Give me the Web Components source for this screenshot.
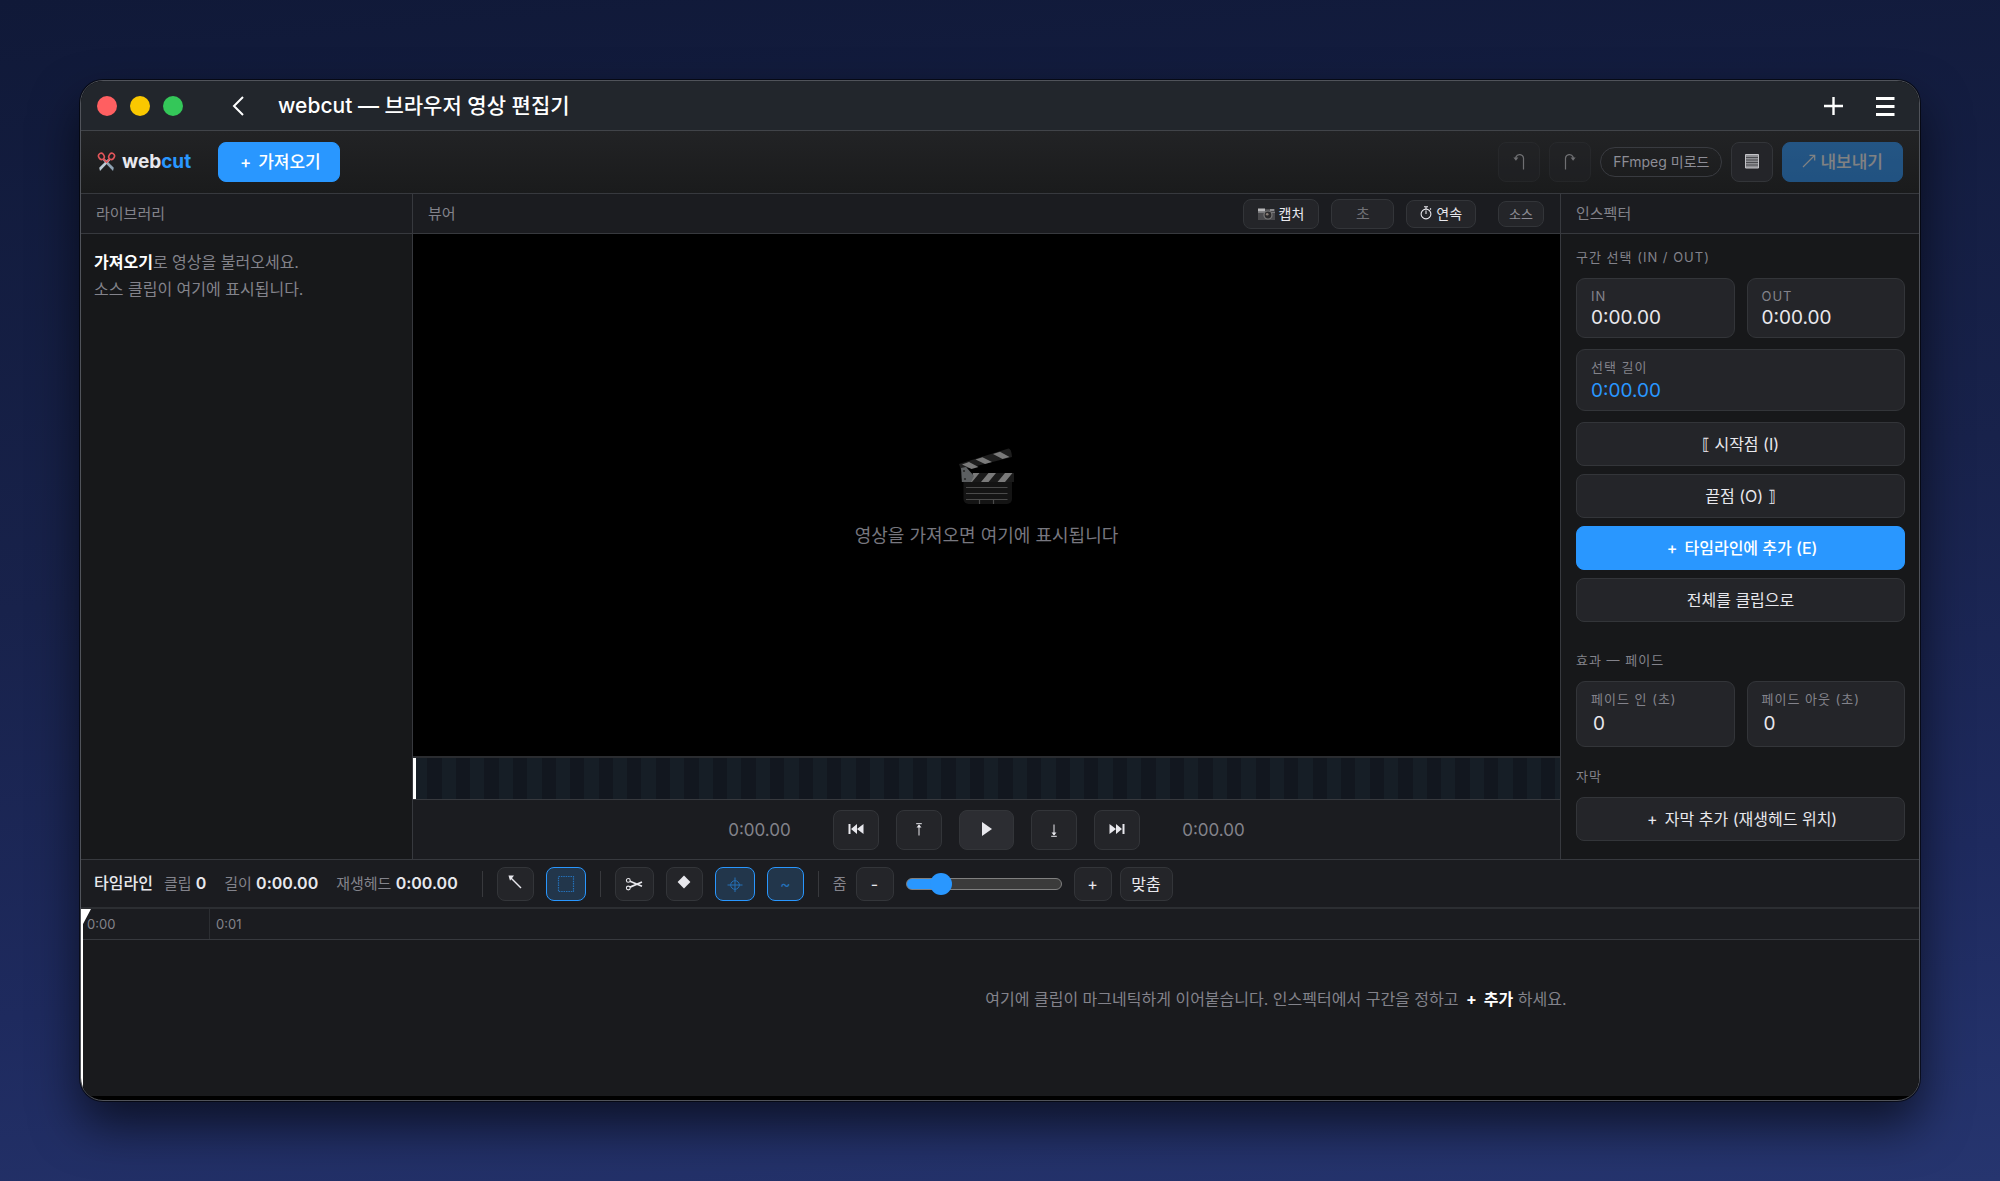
<!DOCTYPE html>
<html lang="ko">
<head>
<meta charset="utf-8">
<meta name="viewport" content="width=device-width, initial-scale=1">
<title>webcut — 브라우저 영상 편집기</title>
<style>
  :root {
    --line: #37393e;
    --edge: #333539;
    --panel: #17181a;
    --bar: #1b1c20;
    --raised: #242529;
    --text: #e8e8ed;
    --muted: #83838b;
    --accent: #2997ff;
    --font: Inter, "Noto Sans CJK KR", sans-serif;
  }
  html { height: 100%; }
  body {
    margin: 0; padding: 80px; box-sizing: border-box; min-height: 100vh; display: flex;
    background: linear-gradient(175deg, #101938 0%, #18224b 45%, #1e2a5e 75%, #26356f 100%);
    font: 16px/1.5 var(--font); color: var(--text);
    -webkit-font-smoothing: antialiased;
  }
  wc-window { flex: 1; min-width: 0; }
</style>
</head>
<body>
<wc-window></wc-window>

<script>
const define = (name, html, setup) => {
  const t = document.createElement('template');
  t.innerHTML = html;
  customElements.define(name, class extends HTMLElement {
    constructor() {
      super();
      this.attachShadow({ mode: 'open' }).append(t.content.cloneNode(true));
    }
    connectedCallback() { if (setup) setup(this, this.shadowRoot); }
  });
};

/* Icons, one drawing per name: width, height, body */
const ICONS = {
  back: [12, 20, '<path d="M11 1 2 10l9 9" fill="none" stroke="currentColor" stroke-width="2"/>'],
  add: [20, 20, '<path d="M10.500 1v18M1 10h19" fill="none" stroke="currentColor" stroke-width="2.400"/>'],
  menu: [20, 22, '<path d="M1 3.500h18.500M1 11.500h18.500M1 19.500h18.500" fill="none" stroke="currentColor" stroke-width="2.800"/>'],
  shears: [19, 20, '<path d="M5.600 8 16 19l.8-3.200L8 7z" fill="#8fa3b3"/><path d="M13.400 8 3 19l-.8-3.200L11 7z" fill="#bccbd6"/><g fill="none" stroke="#e0555a" stroke-width="1.600"><ellipse cx="4.400" cy="4.400" rx="2.700" ry="3.200" transform="rotate(-30 4.400 4.400)"/><ellipse cx="14.600" cy="4.400" rx="2.700" ry="3.200" transform="rotate(30 14.600 4.400)"/><path d="m6.400 7 3.100 3.400L12.600 7"/></g>'],
  undo: [12, 21, '<path d="M10.500 17.500V6a4 4 0 0 0-7.600-1V7" fill="none" stroke="currentColor" stroke-width="1.200"/><path d="M.4 5.500h5L2.900 8.700z" fill="currentColor"/>'],
  redo: [12, 21, '<path d="M1.500 17.500V6a4 4 0 0 1 7.600-1V7" fill="none" stroke="currentColor" stroke-width="1.200"/><path d="M6.600 5.500h5L9.100 8.700z" fill="currentColor"/>'],
  list: [14, 16, '<path d="M.5.500h13v13.500H.5z" fill="#8f9094" stroke="#c3c3c7" stroke-width="1"/><path d="M1 3.500h12M1 6h12M1 8.500h12M1 11h12" stroke="#4a4b4f" stroke-width="1"/>'],
  out: [14, 16, '<path d="M1 13 12.500 1.500M7.500 1.300h5.200v5.200" fill="none" stroke="currentColor" stroke-width="1.200"/>'],
  camera: [17, 13, '<path d="M0 2h17v11H0z" fill="#4a4a4d"/><path d="M0 1.500h7v3H0z" fill="#b9b9bb"/><path d="M0 5h17v1H0z" fill="#77777a"/><path d="M12 2h4v2h-4z" fill="#8b8b8e"/><circle cx="10" cy="8" r="4.600" fill="#777"/><circle cx="10" cy="8" r="3.400" fill="#2c2b2d"/><circle cx="9.200" cy="7.200" r="1.300" fill="#8a7f77"/>'],
  timer: [12, 16, '<circle cx="6" cy="8" r="4.900" fill="none" stroke="currentColor" stroke-width="1.100"/><path d="M6 8V4.600M6 3V1M4 .8h4M10 3.500l1-1" fill="none" stroke="currentColor" stroke-width="1.100"/>'],
  clapper: [56, 58, '<g><path d="M4.500 33h48.500v18a5 5 0 0 1-5 5H9.500a5 5 0 0 1-5-5z" fill="#141414"/><path d="M7 39.500h41.500M7 45.500h41.500M7 51.500h41.500M20.500 52v4M34.500 52v4" stroke="#4a4a4a" stroke-width="1.200"/><path d="M2.500 25H55v9H2.500z" fill="#1a1a1a"/><path d="M22 34l7.500-9H37l-7.500 9zM38.500 34l7.500-9h7.500L46 34zM9 34l5-6v-3h6.500L13 34z" fill="#7a7a7a"/><path d="M0 16 49.500.5q2.500 0 3.300 6.500l.2 2L2 22z" fill="#1e1e1e"/><path d="M3 16.500 10 14l9.500 5-7 2zM16.500 11.500l7-2.200L33 14l-7 2zM34 6l7-2.200 9.500 5.200-7 2z" fill="#7a7a7a"/><path d="M2 20l5-1 8 9-3 6H3z" fill="#5c5f61"/><circle cx="5" cy="23" r="1.100" fill="#2a2a2a"/><circle cx="6" cy="31" r="1.100" fill="#2a2a2a"/></g>'],
  first: [16, 14, '<path d="M.5 1h2v10h-2zM9 1v10L3 6zM15.500 1v10L9 6z" fill="currentColor"/>'],
  last: [16, 14, '<path d="M13.500 1h2v10h-2zM7 1v10l6-5zM.5 1v10L7 6z" fill="currentColor"/>'],
  prev: [8, 14, '<path d="M1.200.7h5.600M4 12.500V2" fill="none" stroke="currentColor" stroke-width="1"/><path d="M1.500 4.500 4 1.500l2.500 3z" fill="currentColor"/>'],
  next: [8, 14, '<path d="M1.200 13.300h5.600M4 1.500V12" fill="none" stroke="currentColor" stroke-width="1"/><path d="M1.500 9.500 4 12.500l2.500-3z" fill="currentColor"/>'],
  play: [12, 16, '<path d="M1 0v14l10-7z" fill="currentColor"/>'],
  pointer: [14, 18, '<path d="M2.500 2.500 13 13" fill="none" stroke="currentColor" stroke-width="1.400"/><path d="M.5.500h5.500L2 5.800z" fill="currentColor"/>'],
  marquee: [18, 18, '<path d="M1.500 1.500h15v15h-15z" fill="none" stroke="currentColor" stroke-width="1.200" stroke-dasharray="1.500 .9"/>'],
  cut: [18, 14, '<g fill="none" stroke="currentColor"><circle cx="3.300" cy="3.400" r="1.900" stroke-width="1.100"/><circle cx="3.300" cy="11" r="1.900" stroke-width="1.100"/><path d="M5 4.300 17 9.300M5 10.100 17 5" stroke-width="1.700"/></g>'],
  keyframe: [14, 18, '<path d="m7 .6 6.400 6.400L7 13.400.6 7z" fill="currentColor"/>'],
  snap: [16, 16, '<g fill="none" stroke="currentColor" stroke-width="1"><circle cx="8" cy="9" r="4.300"/><path d="M8 1.500v14.500M.5 9h15"/></g>']
};
define('wc-icon', '', (el, root) => {
  const [w, h, body] = ICONS[el.getAttribute('name')];
  root.innerHTML = `<style>:host{display:inline-flex;flex:none}svg{display:block}</style>
    <svg width="${w}" height="${h}" viewBox="0 0 ${w} ${h}" aria-hidden="true">${body}</svg>`;
});

define('wc-button', `
<style>
  :host { display: block; flex: none; }
  button {
    box-sizing: border-box; width: var(--w, 100%); height: var(--h, 44px); padding: 0 var(--px, 0px);
    display: flex; align-items: center; justify-content: center; gap: var(--gap, 4px);
    border: 1px solid var(--edge); border-radius: 8px; background: var(--raised);
    color: var(--text); font: 400 var(--fs, 16px)/24px var(--font); white-space: nowrap;
  }
  :host([primary]) button { background: var(--accent); border-color: var(--accent); color: #fff; font-weight: 500; }
  :host([active]) button { background: #22364b; border-color: var(--accent); color: #2470b8; }
  :host([strong]) button { background: #2c2d32; }
  :host([disabled]) button { opacity: .4; }
  :host([primary][disabled]) button { opacity: .44; }
  :host([bare]) button { border: 0; background: none; color: #fff; }
  ::slotted(.plus) { width: 17px; text-align: center; }
</style>
<button type="button"><slot></slot></button>`, (el, root) => {
  const b = root.querySelector('button');
  if (el.hasAttribute('label')) b.setAttribute('aria-label', el.getAttribute('label'));
  if (el.hasAttribute('active')) b.setAttribute('aria-pressed', 'true');
  b.disabled = el.hasAttribute('disabled');
});

define('wc-titlebar', `
<style>
  :host { display: flex; align-items: center; height: 49px; padding: 0 24px 0 16px; background: #22262c; border-bottom: 1px solid #414449; }
  .lights { display: flex; gap: 13px; }
  .lights i { width: 20px; height: 20px; border-radius: 50%; background: var(--c); }
  .back { margin-left: 29px; --w: 52px; --h: 40px; }
  h1 { margin: 0 auto 0 14px; font: 500 21px/32px var(--font); color: #fff; }
  .end { display: flex; gap: 12px; --w: 40px; --h: 40px; margin-right: -10px; }
</style>
<div class="lights"><i style="--c:#ff5f61"></i><i style="--c:#fac800"></i><i style="--c:#34c759"></i></div>
<wc-button class="back" bare label="뒤로"><wc-icon name="back"></wc-icon></wc-button>
<h1><slot></slot></h1>
<div class="end">
  <wc-button bare label="새로 만들기"><wc-icon name="add"></wc-icon></wc-button>
  <wc-button bare label="메뉴"><wc-icon name="menu"></wc-icon></wc-button>
</div>`);

define('wc-toolbar', `
<style>
  :host { display: flex; align-items: center; height: 62px; padding: 0 16px; background: linear-gradient(#222325, #1a1b1c); border-bottom: 1px solid var(--line); --h: 40px; --fs: 17px; }
  .logo { display: flex; align-items: center; gap: 6px; font: 700 19px/28px var(--font); }
  .logo em { font-style: normal; color: var(--accent); }
  .import { margin-left: 27px; --px: 18px; --w: auto; }
  .end { margin-left: auto; display: flex; align-items: center; gap: 9px; }
  .sq { --w: 42px; }
  .badge { padding: 0 12px; border: 1px solid #393b40; border-radius: 15px; font: 14px/28px var(--font); color: #8d8d96; }
  .export { --px: 19px; --w: auto; }
</style>
<div class="logo"><wc-icon name="shears"></wc-icon><span>web<em>cut</em></span></div>
<wc-button class="import" primary><span class="plus">+</span><span>가져오기</span></wc-button>
<div class="end">
  <wc-button class="sq" disabled label="실행 취소"><wc-icon name="undo"></wc-icon></wc-button>
  <wc-button class="sq" disabled label="다시 실행"><wc-icon name="redo"></wc-icon></wc-button>
  <span class="badge">FFmpeg 미로드</span>
  <wc-button class="sq" label="목록"><wc-icon name="list"></wc-icon></wc-button>
  <wc-button class="export" primary disabled><wc-icon name="out"></wc-icon><span>내보내기</span></wc-button>
</div>`);

define('wc-panel', `
<style>
  :host { display: flex; flex-direction: column; min-width: 0; background: var(--panel); }
  header { display: flex; align-items: center; gap: 12px; height: 39px; padding: 0 16px 0 15px; background: var(--bar); border-bottom: 1px solid var(--line); }
  h2 { margin: 0 auto 0 0; font: 400 15px/24px var(--font); color: var(--muted); }
  .body { flex: 1; display: flex; flex-direction: column; }
</style>
<header><h2></h2><slot name="tools"></slot></header>
<div class="body"><slot></slot></div>`, (el, root) => {
  root.querySelector('h2').textContent = el.getAttribute('heading');
});

define('wc-library', `
<style>
  :host { display: block; padding: 15px 13px; font: 16px/27px var(--font); color: var(--muted); }
  p { margin: 0; } b { font-weight: 700; color: #fff; }
</style>
<p><b>가져오기</b>로 영상을 불러오세요.<br>소스 클립이 여기에 표시됩니다.</p>`);

define('wc-stage', `
<style>
  :host { flex: 1; display: flex; flex-direction: column; align-items: center; justify-content: center; gap: 16px; padding-top: 8px; background: #000; }
  p { margin: 0; font: 18px/28px var(--font); color: #77777f; }
</style>
<wc-icon name="clapper"></wc-icon><p><slot></slot></p>`);

define('wc-strip', `
<style>
  :host { display: block; height: 41px; border-top: 2px solid #2a2c30; border-bottom: 1px solid var(--line);
    background: repeating-linear-gradient(90deg, #161e26 0 1.245%, #12171f 1.245% 2.49%); }
  i { display: block; width: 3px; height: 100%; background: #fff; }
</style><i></i>`);

define('wc-transport', `
<style>
  :host { display: flex; align-items: center; justify-content: center; gap: 17px; height: 59px; background: var(--bar); --w: 46px; --h: 40px; }
  time { width: 113px; text-align: center; font: 17px/24px var(--font); color: var(--muted); }
  .play { --w: 55px; }
</style>
<time>0:00.00</time>
<wc-button label="처음으로"><wc-icon name="first"></wc-icon></wc-button>
<wc-button label="이전 편집점"><wc-icon name="prev"></wc-icon></wc-button>
<wc-button class="play" strong label="재생"><wc-icon name="play"></wc-icon></wc-button>
<wc-button label="다음 편집점"><wc-icon name="next"></wc-icon></wc-button>
<wc-button label="끝으로"><wc-icon name="last"></wc-icon></wc-button>
<time>0:00.00</time>`);

define('wc-seconds', `
<style>
  :host { display: block; flex: none; }
  label { display: flex; }
  input { box-sizing: border-box; width: 63px; height: 30px; padding: 0 6px; border: 1px solid var(--edge); border-radius: 8px; background: var(--raised); color: var(--text); font: 15px/20px var(--font); text-align: center; outline: 0; }
  input::placeholder { color: #717176; opacity: 1; }
</style>
<label><input type="text" inputmode="decimal" placeholder="초" aria-label="캡처 간격"></label>`);

define('wc-cell', `
<style>
  :host { display: block; flex: 1; min-width: 0; box-sizing: border-box; padding: 8px 14px 0; border: 1px solid var(--edge); border-radius: 9px; background: var(--raised); }
  .k { display: block; font: 13px/18px var(--font); letter-spacing: 1px; color: var(--muted); }
  .v { font: 19px/26px var(--font); color: var(--text); display: block; box-sizing: border-box; width: 100%; }
  :host([accent]) .v { color: var(--accent); line-height: 30px; }
  input.v { height: 30px; margin: 0; padding: 0 2px; border: 0; background: none; outline: 0; appearance: textfield; }
  input::-webkit-inner-spin-button { appearance: none; }
</style><div></div>`, (el, root) => {
  const k = el.getAttribute('key'), v = el.getAttribute('value');
  root.querySelector('div').innerHTML = el.hasAttribute('editable')
    ? `<label class="k" for="f">${k}</label><input class="v" id="f" type="number" min="0" value="${v}">`
    : `<span class="k">${k}</span><output class="v">${v}</output>`;
});

define('wc-inspector', `
<style>
  :host { display: flex; flex-direction: column; padding: 13px 14px 0 15px; --h: 44px; }
  h3 { margin: 0 0 11px; font: 400 13px/20px var(--font); letter-spacing: 1px; color: var(--muted); }
  .row { display: flex; gap: 12px; margin-bottom: 11px; }
  .stack { display: flex; flex-direction: column; gap: 8px; margin-bottom: 28px; }
  .fade { margin-bottom: 19px; }
  .short { height: 60px; } .mid { height: 62px; } .tall { height: 66px; }
</style>
<h3>구간 선택 (IN / OUT)</h3>
<div class="row"><wc-cell class="short" key="IN" value="0:00.00"></wc-cell><wc-cell class="short" key="OUT" value="0:00.00"></wc-cell></div>
<div class="row"><wc-cell class="mid" accent key="선택 길이" value="0:00.00"></wc-cell></div>
<div class="stack">
  <wc-button><span>⟦ 시작점 (I)</span></wc-button>
  <wc-button><span>끝점 (O) ⟧</span></wc-button>
  <wc-button primary><span class="plus">+</span><span>타임라인에 추가 (E)</span></wc-button>
  <wc-button><span>전체를 클립으로</span></wc-button>
</div>
<h3>효과 — 페이드</h3>
<div class="row fade"><wc-cell class="tall" editable key="페이드 인 (초)" value="0"></wc-cell><wc-cell class="tall" editable key="페이드 아웃 (초)" value="0"></wc-cell></div>
<h3>자막</h3>
<wc-button><span class="plus">+</span><span>자막 추가 (재생헤드 위치)</span></wc-button>`);

define('wc-zoom', `
<style>
  :host { display: flex; align-items: center; gap: 12px; }
  label { margin-right: -3px; font: 15px/24px var(--font); color: var(--muted); }
  input { appearance: none; width: 156px; height: 22px; margin: 0; background: none; }
  input::-webkit-slider-runnable-track { box-sizing: border-box; height: 12px; border: 1px solid #808080; border-radius: 6px; background: linear-gradient(90deg, var(--accent) 20%, #3b3b3b 20%); }
  input::-webkit-slider-thumb { appearance: none; width: 22px; height: 22px; margin-top: -6px; border-radius: 50%; background: var(--accent); }
  wc-button { --w: 38px; }
  .fit { --w: 53px; margin-left: -4px; }
</style>
<label for="z">줌</label>
<wc-button label="축소">-</wc-button>
<input id="z" type="range" min="0" max="100" value="18">
<wc-button label="확대">+</wc-button>
<wc-button class="fit">맞춤</wc-button>`);

define('wc-timeline-bar', `
<style>
  :host { display: flex; align-items: center; gap: 12px; height: 47px; padding: 0 13px; background: var(--bar); border-top: 1px solid var(--line); border-bottom: 2px solid #2c2e32; --h: 34px; --fs: 16px; }
  .info { display: flex; gap: 18px; font: 15px/24px var(--font); color: var(--muted); margin-right: 10px; }
  b { font-size: 16px; font-weight: 600; color: var(--text); }
  .info > b { margin-right: -7px; font-weight: 500; }
  hr { width: 1px; height: 26px; margin: 0 2px; border: 0; background: #38393d; }
  .n { --w: 37px; } .w { --w: 40px; } .m { --w: 39px; }
</style>
<div class="info"><b>타임라인</b><span>클립 <b>0</b></span><span>길이 <b>0:00.00</b></span><span>재생헤드 <b>0:00.00</b></span></div>
<hr>
<wc-button class="n" label="선택"><wc-icon name="pointer"></wc-icon></wc-button>
<wc-button class="w" active label="범위 선택"><wc-icon name="marquee"></wc-icon></wc-button>
<hr>
<wc-button class="m" label="자르기"><wc-icon name="cut"></wc-icon></wc-button>
<wc-button class="n" label="키프레임"><wc-icon name="keyframe"></wc-icon></wc-button>
<wc-button class="w" active label="스냅"><wc-icon name="snap"></wc-icon></wc-button>
<wc-button class="n" active label="파형">~</wc-button>
<hr>
<wc-zoom></wc-zoom>`);

define('wc-timeline', `
<style>
  :host { display: flex; flex-direction: column; position: relative; background: #191a1d; }
  .ruler { display: flex; height: 30px; background: var(--bar); border-bottom: 1px solid var(--line); }
  .ruler span { box-sizing: border-box; width: 129px; padding-left: 6px; border-right: 1px solid #2c2e32; font: 13px/31px var(--font); color: var(--muted); }
  .ruler span:last-child { border: 0; }
  .lane { flex: 1; padding: 46px 0 0 49.2%; }
  p { margin: 0; font: 16px/27px var(--font); color: #83838b; white-space: nowrap; }
  b { color: #fff; } .plus { display: inline-block; width: 17px; text-align: center; }
  .head { position: absolute; left: 0; top: 0; bottom: 0; width: 2px; background: #fff; }
  .head::before { content: ""; position: absolute; left: 0; top: 0; width: 10px; height: 15px; background: #fff; clip-path: polygon(0 0, 100% 0, 20% 100%, 0 100%); }
</style>
<div class="ruler"><span>0:00</span><span>0:01</span></div>
<div class="lane"><p>여기에 클립이 마그네틱하게 이어붙습니다. 인스펙터에서 구간을 정하고 <b><span class="plus">+</span> 추가</b> 하세요.</p></div>
<div class="head"></div>`);

define('wc-window', `
<style>
  :host { display: flex; flex-direction: column; overflow: hidden; border: 1px solid #50535a; border-radius: 23px; background: #000;
    box-shadow: 0 0 0 1px #0009, 0 24px 48px #0009; }
  main { flex: 1; display: grid; grid-template-columns: 332px minmax(0, 1fr) 359px; }
  .library { border-right: 1px solid var(--line); }
  .inspector { border-left: 1px solid var(--line); box-sizing: border-box; }
  wc-timeline { height: 187px; margin-bottom: 4px; }
  .tool { --fs: 14px; --px: 14px; --h: 30px; }
  .timer { --h: 28px; --px: 13px; }
  .source { --fs: 13px; --h: 26px; --px: 10px; --text: #8d8d96; margin-left: 10px; }
</style>
<wc-titlebar>webcut — 브라우저 영상 편집기</wc-titlebar>
<wc-toolbar></wc-toolbar>
<main>
  <wc-panel class="library" heading="라이브러리"><wc-library></wc-library></wc-panel>
  <wc-panel heading="뷰어">
    <wc-button slot="tools" class="tool"><wc-icon name="camera"></wc-icon><span>캡처</span></wc-button>
    <wc-seconds slot="tools"></wc-seconds>
    <wc-button slot="tools" class="tool timer"><wc-icon name="timer"></wc-icon><span>연속</span></wc-button>
    <wc-button slot="tools" class="tool source">소스</wc-button>
    <wc-stage>영상을 가져오면 여기에 표시됩니다</wc-stage>
    <wc-strip></wc-strip>
    <wc-transport></wc-transport>
  </wc-panel>
  <wc-panel class="inspector" heading="인스펙터"><wc-inspector></wc-inspector></wc-panel>
</main>
<wc-timeline-bar></wc-timeline-bar>
<wc-timeline></wc-timeline>`);
</script>
</body>
</html>
